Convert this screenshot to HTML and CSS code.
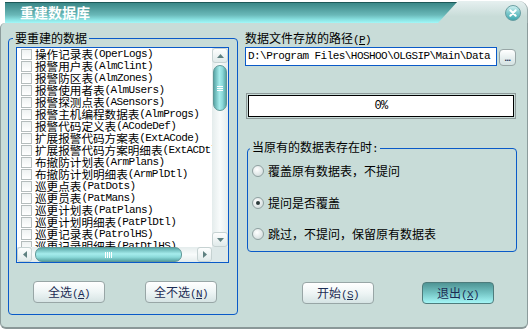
FILE: index.html
```html
<!DOCTYPE html>
<html>
<head>
<meta charset="utf-8">
<link rel="stylesheet" href="styles.css">
</head>
<body>
<div class="frame">
  <div class="top">
    <div class="tab"><span class="title">重建数据库</span></div>
    <div class="cap">
      <span class="close">
        <svg width="16" height="16" viewBox="0 0 16 16">
          <defs>
            <linearGradient id="cg" x1="0" y1="0" x2="0" y2="1">
              <stop offset="0" stop-color="#d4f4f4"/>
              <stop offset="0.5" stop-color="#7cc8cc"/>
              <stop offset="1" stop-color="#3aa6ae"/>
            </linearGradient>
          </defs>
          <circle cx="8" cy="8" r="7.5" fill="url(#cg)" stroke="#6a9ea2" stroke-width="1"/>
          <path d="M5.3 5.3 L10.7 10.7 M10.7 5.3 L5.3 10.7" stroke="#fff" stroke-width="2" stroke-linecap="round"/>
        </svg>
      </span>
    </div>
  </div>
  <div class="body">
    <fieldset class="group left">
      <legend>要重建的数据</legend>
      <div class="list">
        <div class="items">
          <div class="item"><span class="cb"></span>操作记录表<span class="en">(OperLogs)</span></div>
          <div class="item"><span class="cb"></span>报警用户表<span class="en">(AlmClint)</span></div>
          <div class="item"><span class="cb"></span>报警防区表<span class="en">(AlmZones)</span></div>
          <div class="item"><span class="cb"></span>报警使用者表<span class="en">(AlmUsers)</span></div>
          <div class="item"><span class="cb"></span>报警探测点表<span class="en">(ASensors)</span></div>
          <div class="item"><span class="cb"></span>报警主机编程数据表<span class="en">(AlmProgs)</span></div>
          <div class="item"><span class="cb"></span>报警代码定义表<span class="en">(ACodeDef)</span></div>
          <div class="item"><span class="cb"></span>扩展报警代码方案表<span class="en">(ExtACode)</span></div>
          <div class="item"><span class="cb"></span>扩展报警代码方案明细表<span class="en">(ExtACDtl)</span></div>
          <div class="item"><span class="cb"></span>布撤防计划表<span class="en">(ArmPlans)</span></div>
          <div class="item"><span class="cb"></span>布撤防计划明细表<span class="en">(ArmPlDtl)</span></div>
          <div class="item"><span class="cb"></span>巡更点表<span class="en">(PatDots)</span></div>
          <div class="item"><span class="cb"></span>巡更员表<span class="en">(PatMans)</span></div>
          <div class="item"><span class="cb"></span>巡更计划表<span class="en">(PatPlans)</span></div>
          <div class="item"><span class="cb"></span>巡更计划明细表<span class="en">(PatPlDtl)</span></div>
          <div class="item"><span class="cb"></span>巡更记录表<span class="en">(PatrolHS)</span></div>
          <div class="item"><span class="cb"></span>巡更记录明细表<span class="en">(PatDtlHS)</span></div>
        </div>
        <div class="vscroll">
          <div class="arrow"><svg width="7" height="4" viewBox="0 0 7 4"><polygon points="0,4 3.5,0 7,4" fill="#5e8080"/></svg></div>
          <div class="vthumb"><i></i><i></i><i></i></div>
          <div class="space"></div>
          <div class="arrow"><svg width="7" height="4" viewBox="0 0 7 4"><polygon points="0,0 3.5,4 7,0" fill="#5e8080"/></svg></div>
        </div>
        <div class="hscroll">
          <div class="arrow h"><svg width="4" height="7" viewBox="0 0 4 7"><polygon points="4,0 0,3.5 4,7" fill="#5e8080"/></svg></div>
          <div class="hthumb"><i></i><i></i><i></i><i></i></div>
          <div class="space"></div>
          <div class="arrow h"><svg width="4" height="7" viewBox="0 0 4 7"><polygon points="0,0 4,3.5 0,7" fill="#5e8080"/></svg></div>
        </div>
        <div class="corner"></div>
      </div>
      <div class="btnrow">
        <button class="btn">全选<span class="en">(<u>A</u>)</span></button>
        <button class="btn">全不选<span class="en">(<u>N</u>)</span></button>
      </div>
    </fieldset>

    <div class="right">
      <div class="label">数据文件存放的路径<span class="en">(<u>P</u>)</span></div>
      <div class="pathrow">
        <div class="path">D:\Program Files\HOSHOO\OLGSIP\Main\Data</div>
        <button class="dots">...</button>
      </div>
      <div class="progress"><div class="progress-in"><span class="en pct">0%</span></div></div>
      <fieldset class="group opts">
        <legend>当原有的数据表存在时<span class="en">:</span></legend>
        <div class="opt"><span class="radio"></span>覆盖原有数据表，不提问</div>
        <div class="opt"><span class="radio on"></span>提问是否覆盖</div>
        <div class="opt"><span class="radio"></span>跳过，不提问，保留原有数据表</div>
      </fieldset>
      <div class="actions">
        <button class="btn">开始<span class="en">(<u>S</u>)</span></button>
        <button class="btn exit">退出<span class="en">(<u>X</u>)</span></button>
      </div>
    </div>
  </div>
</div>
</body>
</html>
```

FILE: styles.css
```css
* { box-sizing: border-box; }
html, body { margin: 0; padding: 0; }
body {
  width: 530px;
  height: 329px;
  overflow: hidden;
  background: #ffffff;
  font-family: "Noto Sans CJK SC", sans-serif;
  font-size: 12px;
  color: #000;
}
.en {
  font-family: "Liberation Mono", monospace;
  font-size: 11px;
  letter-spacing: -0.6px;
}
.frame {
  width: 528px;
  height: 329px;
  display: flex;
  flex-direction: column;
}
.top {
  height: 23px;
  flex: none;
  display: flex;
}
.tab {
  margin-left: 5px;
  margin-top: 2px;
  width: 453px;
  height: 21px;
  flex: none;
  border-top: 1px solid #1d5858;
  background: linear-gradient(#3a8888 0%, #529f9f 30%, #6ab9b9 60%, #88e0e0 82%, #a2f8f8 100%);
  padding-left: 15px;
}
.title {
  color: #fff;
  font-weight: bold;
  font-size: 14px;
  line-height: 19px;
}
.cap {
  flex: 1;
  margin-left: -20px;
  margin-top: 1px;
  height: 22px;
  background: linear-gradient(#e6f0f0, #c8dcd8 70%);
  border-top-right-radius: 9px;
  border-right: 1px solid #9aaaaa;
  clip-path: polygon(20px 0, 100% 0, 100% 100%, 0 100%);
  display: flex;
  justify-content: flex-end;
  padding: 4px 6px 0 0;
}
.close { width: 16px; height: 16px; display: block; }
.close svg { display: block; }
.body {
  flex: 1;
  background: #c8dcd8;
  border: 1px solid #8c9c9c;
  border-top: none;
  border-bottom: 2px solid #8a9898;
  border-radius: 5px 0 6px 6px;
  display: flex;
  align-items: flex-start;
  padding: 8px 0 0 7px;
}
fieldset { margin: 0; min-width: 0; }
.group {
  border: 1px solid #0a5ac8;
  border-radius: 4px;
}
.group legend {
  line-height: 14px;
  padding: 0 2px;
  margin-left: -3px;
}
.left {
  width: 230px;
  padding: 2px 9px 11px 7px;
}
.list {
  width: 213px;
  height: 216px;
  border: 1px solid #0a5ac8;
  background: #fff;
  display: grid;
  grid-template-columns: 195px 16px;
  grid-template-rows: 199px 15px;
}
.items { overflow: hidden; }
.item {
  height: 12px;
  line-height: 12px;
  font-size: 11.6px;
  display: flex;
  align-items: center;
  white-space: nowrap;
  padding-left: 4px;
}
.cb {
  width: 11px;
  height: 11px;
  flex: none;
  border: 1px solid #b4bcbc;
  background: linear-gradient(#eef2f2, #ffffff);
  margin-right: 3px;
}
.vscroll {
  display: flex;
  flex-direction: column;
  background: linear-gradient(90deg, #e4ecec, #f8fbfb 50%, #e4ecec);
}
.hscroll {
  display: flex;
  background: linear-gradient(#e4ecec, #f8fbfb 50%, #e4ecec);
}
.space { flex: 1; }
.arrow {
  height: 15px;
  flex: none;
  border: 1px solid #c6d2d2;
  border-radius: 3px;
  background: linear-gradient(#fdfefe, #e0eaea);
  display: flex;
  align-items: center;
  justify-content: center;
}
.arrow.h { width: 15px; height: 15px; }
.arrow svg { display: block; }
.vthumb {
  margin: 2px 1px 0;
  height: 46px;
  flex: none;
  border-radius: 7px;
  border: 1px solid #5f9898;
  background: linear-gradient(90deg, #5aa8a8, #a6ecec 45%, #8cdada 70%, #58a4a4);
  display: flex;
  flex-direction: column;
  justify-content: center;
  align-items: center;
  gap: 1px;
}
.vthumb i { display: block; width: 6px; height: 1px; background: #fff; }
.hthumb {
  margin: 0 0 0 3px;
  width: 147px;
  height: 15px;
  flex: none;
  border-radius: 7px;
  border: 1px solid #5f9898;
  background: linear-gradient(#5aa8a8, #a6ecec 45%, #8cdada 70%, #58a4a4);
  display: flex;
  justify-content: center;
  align-items: center;
  gap: 1px;
}
.hthumb i { display: block; width: 1px; height: 6px; background: #fff; }
.corner { background: #dde8e8; }
.btn {
  width: 72px;
  height: 22px;
  padding: 0;
  border: 1px solid #98a6a6;
  border-radius: 4px;
  background: linear-gradient(#ffffff, #eef5f5 50%, #d6e4e4);
  font-family: "Noto Sans CJK SC", sans-serif;
  font-size: 12px;
  color: #1c2c54;
  line-height: 20px;
}
.btn.exit {
  border-color: #4e7c7c;
  background: linear-gradient(#4f9494, #74c4c4 50%, #a4f6f6);
}
.btnrow {
  display: flex;
  gap: 40px;
  margin-top: 18px;
  padding-left: 17px;
}
.right {
  margin-left: 7px;
  width: 272px;
  display: flex;
  flex-direction: column;
}
.label { line-height: 14px; }
.pathrow { display: flex; align-items: flex-start; }
.path {
  width: 252px;
  height: 19px;
  border: 1px solid #0a5ac8;
  background: #fff;
  padding-left: 2px;
  font-family: "Liberation Mono", monospace;
  font-size: 11px;
  letter-spacing: -0.55px;
  line-height: 17px;
  white-space: nowrap;
  overflow: hidden;
}
.dots {
  margin: 2px 0 0 2px;
  width: 17px;
  height: 17px;
  padding: 0;
  border: 1px solid #98a6a6;
  border-radius: 4px;
  background: linear-gradient(#ffffff, #e8f0f0 50%, #d4e2e2);
  font-family: "Liberation Sans", sans-serif;
  font-weight: bold;
  font-size: 9px;
  line-height: 16px;
  letter-spacing: -0.5px;
  color: #1c2c54;
}
.progress {
  margin: 27px 0 0 1px;
  width: 270px;
  height: 26px;
  border: 1px solid #8e9a9a;
  padding: 1px;
}
.progress-in {
  height: 100%;
  border: 1px solid #000;
  background: #fff;
  display: flex;
  align-items: center;
  justify-content: center;
}
.pct { font-size: 12px; letter-spacing: -0.8px; }
.opts {
  margin: 21px 0 0 2px;
  width: 270px;
  padding: 8px 4px 10px 4px;
  display: flex;
  flex-direction: column;
  gap: 17.5px;
}
.opts legend { margin-left: -2px; }
.opt {
  height: 14px;
  line-height: 14px;
  display: flex;
  align-items: center;
  white-space: nowrap;
}
.radio {
  width: 12px;
  height: 12px;
  flex: none;
  border-radius: 50%;
  border: 1px solid #8fa0a0;
  background: radial-gradient(circle at 40% 35%, #ffffff, #d4dede 80%);
  margin-right: 4px;
  display: flex;
  align-items: center;
  justify-content: center;
}
.radio.on::after {
  content: "";
  width: 4px;
  height: 4px;
  border-radius: 50%;
  background: #2c3c3c;
}
.actions {
  display: flex;
  gap: 48px;
  margin-top: 30px;
  padding-left: 57px;
}
```
